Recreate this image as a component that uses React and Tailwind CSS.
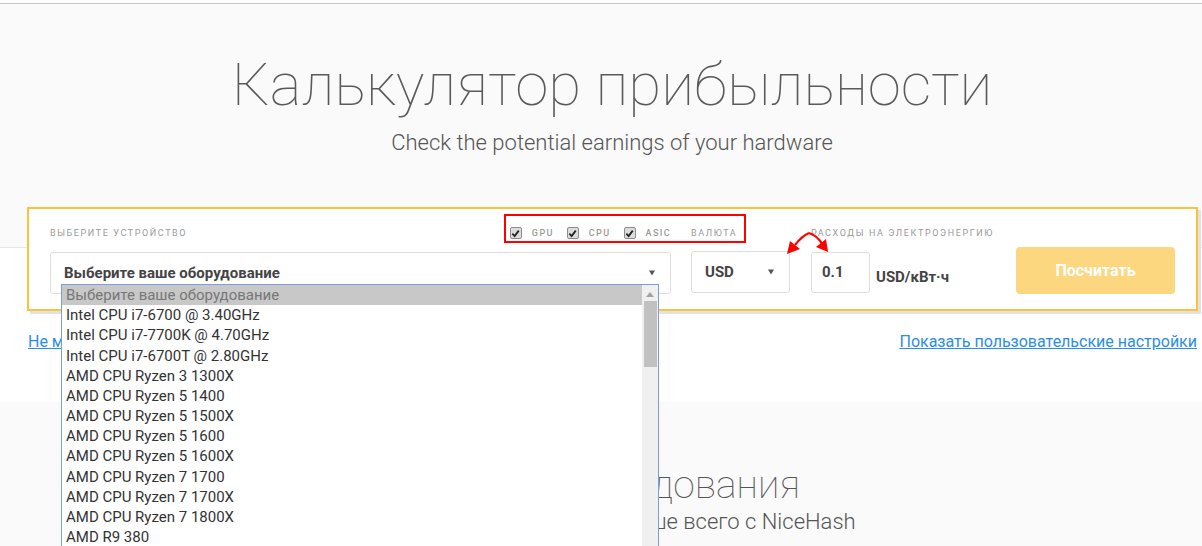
import React from "react";

const devices = [
  "Выберите ваше оборудование",
  "Intel CPU i7-6700 @ 3.40GHz",
  "Intel CPU i7-7700K @ 4.70GHz",
  "Intel CPU i7-6700T @ 2.80GHz",
  "AMD CPU Ryzen 3 1300X",
  "AMD CPU Ryzen 5 1400",
  "AMD CPU Ryzen 5 1500X",
  "AMD CPU Ryzen 5 1600",
  "AMD CPU Ryzen 5 1600X",
  "AMD CPU Ryzen 7 1700",
  "AMD CPU Ryzen 7 1700X",
  "AMD CPU Ryzen 7 1800X",
  "AMD R9 380",
];

function Check() {
  return (
    <span className="flex h-[12px] w-[12px] items-center justify-center rounded-[2px] border border-[#8c8c8c] bg-[#dcdcdc]">
      <svg width="9" height="9" viewBox="0 0 10 10">
        <path d="M1.5 5.2 L4 7.8 L8.6 1.8" fill="none" stroke="#222" strokeWidth="2" />
      </svg>
    </span>
  );
}

function Label({ children, className = "" }) {
  return (
    <div className={"text-[9px] leading-[12px] tracking-[1.6px] text-[#999] uppercase " + className}>
      {children}
    </div>
  );
}

function Arrow() {
  return (
    <svg width="6" height="6" viewBox="0 0 10 10" className="ml-auto">
      <path d="M0 1 L10 1 L5 9 Z" fill="#555" />
    </svg>
  );
}

export default function App() {
  return (
    <div className="h-[546px] overflow-hidden bg-white font-['Roboto',sans-serif] text-[#444]">
      <div className="h-[3px] bg-white" />
      <div className="h-px bg-[#c6c6c6]" />

      {/* Hero */}
      <section className="h-[244px] border-b border-[#e6e6e6] bg-[#fafafa] pl-[22px] pt-[44px] text-center">
        <h1 className="text-[60px] font-thin leading-[74px] text-[#5a5a5a]">Калькулятор прибыльности</h1>
        <p className="mt-[7px] text-[22px] font-light leading-[28px] text-[#555]">
          Check the potential earnings of your hardware
        </p>
      </section>

      <div className="flow-root h-[154px] bg-white">
        {/* Calculator box */}
        <div className="relative z-10 -mt-[41px] ml-[27px] flex h-[104px] w-[1171px] border-2 border-[#f9c33d] bg-white px-[21px] pt-[18px] shadow-[3px_3px_0_#e2e2e2]">
          <div className="w-[621px]">
            <div className="flex items-center">
              <Label>Выберите устройство</Label>
              <div className="ml-auto flex items-center text-[9px] font-medium leading-[12px] tracking-[1.4px] text-[#999]">
                <Check />
                <span className="ml-[10px] mr-[13px]">GPU</span>
                <Check />
                <span className="ml-[10px] mr-[13px]">CPU</span>
                <Check />
                <span className="ml-[10px]">ASIC</span>
              </div>
            </div>
            <div className="relative mt-[13px]">
              <div className="flex h-[42px] items-center rounded-[3px] border border-[#dedede] pl-[13px] pr-[15px]">
                <span className="text-[15px] font-bold text-[#444]">Выберите ваше оборудование</span>
                <Arrow />
              </div>
              {/* open dropdown */}
              <div className="absolute left-[11px] top-[32px] flex h-[300px] w-[598px] border border-[#7c9fd9] bg-white">
                <ul className="flex-1">
                  {devices.map((d, i) => (
                    <li
                      key={d}
                      className={
                        "pl-[4px] text-[15px] leading-[20.17px] " +
                        (i === 0 ? "bg-[#c8c8c8] text-[#777]" : "text-[#333]")
                      }
                    >
                      {d}
                    </li>
                  ))}
                </ul>
                <div className="flex w-[16px] flex-col items-center bg-[#f0f0f0]">
                  <svg width="8" height="5" viewBox="0 0 8 5" className="mt-[7px]">
                    <path d="M0 5 L4 0 L8 5 Z" fill="#a3a3a3" />
                  </svg>
                  <div className="mt-[4px] h-[66px] w-[13px] bg-[#c1c1c1]" />
                </div>
              </div>
            </div>
          </div>

          <div className="ml-[20px] w-[99px]">
            <Label>Валюта</Label>
            <div className="mt-[12px] flex h-[42px] items-center rounded-[3px] border border-[#dedede] pl-[13px] pr-[15px]">
              <span className="text-[15px] font-bold text-[#444]">USD</span>
              <Arrow />
            </div>
          </div>

          <div className="relative ml-[21px]">
            <Label>Расходы на электроэнергию</Label>
            <div className="mt-[13px] flex items-center">
              <div className="flex h-[41px] w-[59px] items-center rounded-[3px] border border-[#dedede] pl-[10px] text-[15px] font-bold text-[#444]">
                0.1
              </div>
              <span className="ml-[6px] mt-[9px] text-[15px] font-bold text-[#444]">USD/кВт·ч</span>
            </div>
          </div>

          <div className="ml-auto flex items-end pb-[15px]">
            <button className="h-[47px] w-[159px] rounded-[4px] bg-[#fcd780] text-[16px] font-bold text-white">
              Посчитать
            </button>
          </div>

          {/* annotation: red frame + arrows */}
          <div className="pointer-events-none absolute left-[475px] top-[5px] h-[29px] w-[242px] border-2 border-[#ff0000]" />
          <svg className="pointer-events-none absolute left-[753px] top-[16px]" width="52" height="36" viewBox="0 0 52 36">
            <path d="M27 8 Q20 11 13 20" fill="none" stroke="#f00" strokeWidth="2.2" />
            <path d="M27 8 Q36 11 40 19" fill="none" stroke="#f00" strokeWidth="2.2" />
            <path d="M5 29 L8 16 L18 24 Z" fill="#f00" />
            <path d="M46 27 L34 22 L44 14 Z" fill="#f00" />
          </svg>
        </div>

        <div className="ml-[28px] mt-[21px] flex w-[1169px] justify-between text-[16px] leading-[20px] text-[#2a8ee8]">
          <a href="#" className="underline">Не можете найти свое оборудование?</a>
          <a href="#" className="underline">Показать пользовательские настройки</a>
        </div>
      </div>

      {/* Next section */}
      <section className="h-[200px] bg-[#fafafa] pl-[22px] pt-[60px] text-center">
        <h2 className="text-[39px] font-thin leading-[46px] text-[#555]">Выбор оборудования</h2>
        <p className="text-[22px] font-light leading-[28px] text-[#555]">
          Узнайте, что приносит больше всего с NiceHash
        </p>
      </section>
    </div>
  );
}
